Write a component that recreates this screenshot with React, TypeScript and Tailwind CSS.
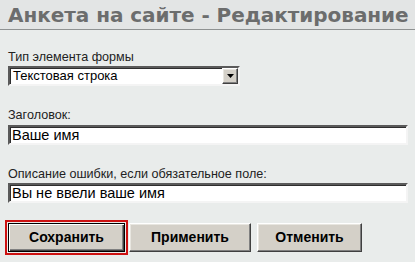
import React from 'react';

const raised =
  'border border-t-white border-l-white border-r-[#404040] border-b-[#404040] shadow-[inset_-1px_-1px_0_#808080,inset_1px_1px_0_#e8e6e0]';

const field =
  'h-[20px] border-2 border-t-[#5a5a5a] border-l-[#5a5a5a] border-r-[#f4f4f4] border-b-[#f4f4f4] bg-white shadow-[inset_1px_1px_0_#2e2e2e]';

const label = "text-[12.6px] leading-[15px] text-[#222] font-['Liberation_Sans',sans-serif]";

const App: React.FC = () => {
  return (
    <div className="w-[415px] h-[262px] bg-[#e9eceb] font-['DejaVu_Sans',sans-serif] text-black overflow-hidden">
      {/* шапка */}
      <div className="h-[30px] bg-[#e3e5e5] border-b border-[#8f9292] px-2 flex items-center">
        <h1 className="text-[20px] font-bold text-[#6c6d6d] leading-none whitespace-nowrap tracking-[-0.05px]">
          Анкета на сайте - Редактирование
        </h1>
      </div>

      <div className="px-2 pt-[20px]">
        {/* тип элемента */}
        <div className={label}>Тип элемента формы</div>
        <div className={`mt-[1px] w-[232px] flex items-stretch ${field}`}>
          <div className="flex-1 pl-[3px] font-['Liberation_Sans',sans-serif] text-[13px] leading-[15px]">
            Текстовая строка
          </div>
          <div className={`w-[16px] bg-[#d4d0c8] flex items-center justify-center ${raised}`}>
            <svg width="7" height="4" viewBox="0 0 7 4">
              <polygon points="0,0 7,0 3.5,4" fill="#000" />
            </svg>
          </div>
        </div>

        {/* заголовок */}
        <div className={`mt-[22px] ${label}`}>Заголовок:</div>
        <div className={`mt-[2px] w-[400px] ${field}`}>
          <div className="pl-[2px] font-['Liberation_Sans',sans-serif] text-[14.5px] leading-[16px]">
            Ваше имя
          </div>
        </div>

        {/* описание ошибки */}
        <div className={`mt-[22px] ${label}`}>Описание ошибки, если обязательное поле:</div>
        <div className={`mt-[1px] w-[400px] ${field}`}>
          <div className="pl-[2px] font-['Liberation_Sans',sans-serif] text-[14.5px] leading-[16px]">
            Вы не ввели ваше имя
          </div>
        </div>

        {/* кнопки */}
        <div className="mt-[20px] flex items-center font-['Liberation_Sans',sans-serif] text-[14px] font-bold">
          <button className="w-[117px] h-[29px] bg-[#d4d0c8] border border-black outline-2 outline-[#cc1111] outline-offset-1 shadow-[inset_1px_1px_0_#fff,inset_-1px_-1px_0_#404040,inset_-2px_-2px_0_#808080]">
            Сохранить
          </button>
          <button className={`ml-[4px] w-[122px] h-[29px] bg-[#d4d0c8] ${raised}`}>Применить</button>
          <button className={`ml-[6px] w-[105px] h-[29px] bg-[#d4d0c8] ${raised}`}>Отменить</button>
        </div>
      </div>
    </div>
  );
};

export default App;
